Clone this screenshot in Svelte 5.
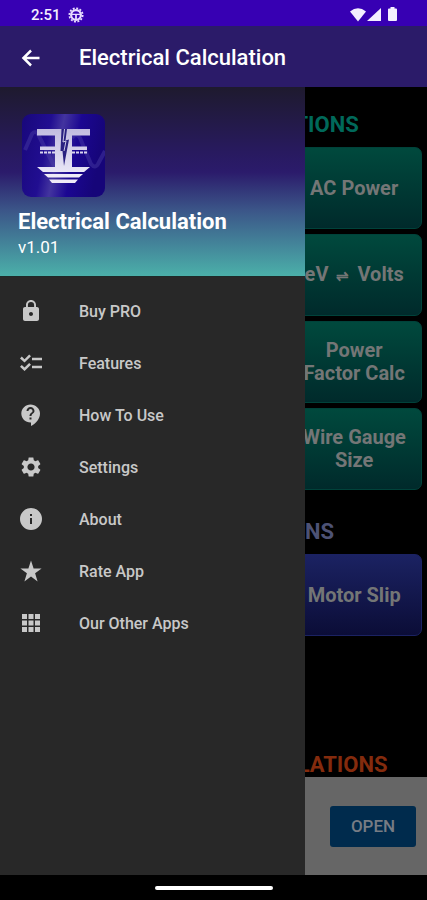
<script>
    const menu = [
        { label: "Buy PRO", path: "M18 8h-1V6c0-2.8-2.2-5-5-5S7 3.200 7 6v2H6c-1.100 0-2 .9-2 2v10c0 1.100.9 2 2 2h12c1.100 0 2-.9 2-2V10c0-1.100-.9-2-2-2zM12 17c-1.100 0-2-.9-2-2s.9-2 2-2 2 .9 2 2-.9 2-2 2zM15.100 8H8.900V6a3.100 3.100 0 0 1 6.200 0z" },
        { label: "Features", path: "M23 6.700h-10v2.500h10V6.700zm0 8h-10v2.500h10v-2.500zM5.540 11.500L1 7.460l1.800-1.900 2.740 2.600 4.640-4.600 1.800 1.800L5.540 11.500zm0 8.500L1 15.860l1.800-1.900 2.740 2.600 4.640-4.600 1.800 1.800L5.540 20z" },
        { label: "How To Use", path: "M11.500 1.500C6.500 1.500 2.300 5.500 2.300 10.500S6.500 19.500 11.500 19.500h.5v3.500c5.200-2.500 9-7.300 9-12.500C21 5.500 16.500 1.500 11.500 1.500zm1 15h-2v-2h2v2zm0-3.500h-2c0-3.250 3-3 3-5 0-1.100-.9-2-2-2s-2 .9-2 2h-2c0-2.210 1.790-4 4-4s4 1.790 4 4c0 2.500-3 2.750-3 5z" },
        { label: "Settings", path: "M19.140 12.940c.04-.3.06-.61.06-.94 0-.32-.02-.64-.07-.94l2.030-1.580c.18-.14.23-.41.12-.61l-1.920-3.320c-.12-.22-.37-.29-.59-.22l-2.390.96c-.5-.38-1.030-.7-1.620-.94l-.36-2.540c-.04-.24-.24-.41-.48-.41h-3.840c-.24 0-.43.17-.47.41l-.36 2.540c-.59.24-1.130.57-1.620.94l-2.390-.96c-.22-.08-.47 0-.59.22L2.740 8.870c-.12.21-.08.47.12.61l2.030 1.580c-.05.3-.09.63-.09.94s.02.64.07.94l-2.030 1.580c-.18.14-.23.41-.12.61l1.920 3.320c.12.22.37.29.59.22l2.390-.96c.5.38 1.030.7 1.620.94l.36 2.540c.05.24.24.41.48.41h3.840c.24 0 .44-.17.47-.41l.36-2.540c.59-.24 1.130-.56 1.620-.94l2.390.96c.22.08.47 0 .59-.22l1.920-3.320c.12-.22.07-.47-.12-.61l-2.010-1.580zM12 15.600c-1.980 0-3.600-1.620-3.600-3.600s1.620-3.600 3.600-3.600 3.600 1.620 3.600 3.600-1.620 3.600-3.600 3.600z" },
        { label: "About", path: "M12 1a11 11 0 1 0 0 22 11 11 0 0 0 0-22zm1 16h-2v-6h2v6zm0-8h-2V7h2v2z" },
        { label: "Rate App", path: "M12 1.500l2.600 8 8 .1-6.500 4.700 2.500 8.200-6.600-5-6.600 5 2.500-8.200L1.400 9.600l8-.1z" },
        { label: "Our Other Apps", path: "M3 3h5v5H3zm6.500 0h5v5h-5zm6.500 0h5v5h-5zM3 9.500h5v5H3zm6.500 0h5v5h-5zm6.500 0h5v5h-5zM3 16h5v5H3zm6.500 0h5v5h-5zm6.500 0h5v5h-5z" }
    ];

    const sections = [
        { title: "ELECTRICAL CALCULATIONS", tone: "teal", rows: 4, items: [["AC Power"], ["eV", "Volts"], ["Power Factor Calc"], ["Wire Gauge Size"]] },
        { title: "MOTOR CALCULATIONS", tone: "blue", rows: 2, items: [["Motor Slip"]] },
        { title: "POWER & ENERGY CALCULATIONS", tone: "orange", rows: 1, items: [] }
    ];
</script>

<div class="app">
    <div class="status_bar">
        <span>2:51</span>
        <svg viewBox="0 0 18 18" width="16" height="16">
            <circle cx="9" cy="9" r="7.500" fill="none" stroke="#e8dcff" stroke-width="2" stroke-dasharray="2.200 1.727" />
            <circle cx="9" cy="9" r="5.500" fill="none" stroke="#e8dcff" stroke-width="2.500" />
            <path d="M4 7.500h10v1.500H4zM8 8h2v6H8z" fill="#e8dcff" />
        </svg>
        <svg class="status_icons" viewBox="0 0 50 16" width="50" height="16">
            <path d="M1 4.500Q9 -2 17 4.500L9 14.500z" />
            <path d="M32 1v13H18z" />
            <path d="M41.500 0h4v1.500h1.500q1 0 1 1v10.500q0 1-1 1h-7q-1 0-1-1V2.500q0-1 1-1h1.500z" />
        </svg>
    </div>

    <header class="app_bar">
        <button class="back" aria-label="Back">
            <svg viewBox="0 0 24 24" width="24" height="24">
                <path d="M20.500 10.700H7.600l5.300-5.300L11.200 3.500 2.700 12l8.500 8.500 1.700-1.900L7.600 13.300H20.500z" />
            </svg>
        </button>
        <h1>Electrical Calculation</h1>
    </header>

    <div class="body">
        <main>
            {#each sections as section}
                <section class={section.tone}>
                    <h2>{section.title}</h2>
                    <div class="cards" style="--rows: {section.rows}">
                        {#each section.items as [from, to]}
                            <button class="card">
                                {from}{#if to}<span class="swap">⇌</span>{to}{/if}
                            </button>
                        {/each}
                    </div>
                </section>
            {/each}
        </main>

        <aside class="ad">
            <button class="open">OPEN</button>
        </aside>

        <nav class="drawer">
            <div class="drawer_header">
                <svg class="logo" viewBox="0 0 83 83" width="83" height="83">
                    <defs>
                        <linearGradient id="tile" x1="0" y1="0" x2="1" y2="0.200">
                            <stop offset="0" stop-color="#18077b" />
                            <stop offset="0.350" stop-color="#210e91" />
                            <stop offset="0.500" stop-color="#43349f" />
                            <stop offset="0.700" stop-color="#1b0792" />
                            <stop offset="1" stop-color="#160579" />
                        </linearGradient>
                        <linearGradient id="metal" x1="0" y1="0" x2="0" y2="1">
                            <stop offset="0" stop-color="#c1bce0" />
                            <stop offset="1" stop-color="#e9e6f6" />
                        </linearGradient>
                    </defs>
                    <rect width="83" height="83" rx="9" fill="url(#tile)" />
                    <path d="M3 36L10 20q3-4 6 0l15 30q3 5 6 0M50 24q4-6 8 0l11 26q4 5 7 0l7-13" fill="none" stroke="#5144aa" stroke-width="4" opacity="0.400" />
                    <!-- mirrored E pair standing on the earth symbol -->
                    <path d="M15 15H68V21.500H50V32.500H65V36H50V53H68L62 58H21L15 53H33V36H18V32.500H33V21.500H15z" fill="url(#metal)" />
                    <path d="M39.500 15H45L43.500 26.500L47 25.500L42 52L40.500 37H38.500z" fill="#292080" />
                    <path d="M42.500 15L41 28L44 27L42 37" fill="none" stroke="#c9c5e4" stroke-width="1" />
                    <path d="M18 38.500h15M50 38.500h15" stroke="#d9d5ee" stroke-width="2" stroke-dasharray="3 1" />
                    <path d="M22 60h39l-4 3.500H26zM27 65.500h29l-3 3.500H30z" fill="#efecf7" />
                </svg>
                <strong>Electrical Calculation</strong>
                <span>v1.01</span>
            </div>
            <ul class="menu">
                {#each menu as entry}
                    <li>
                        <a href="#menu">
                            <svg viewBox="0 0 24 24" width="24" height="24">
                                <path d={entry.path} fill-rule="evenodd" />
                            </svg>
                            {entry.label}
                        </a>
                    </li>
                {/each}
            </ul>
        </nav>
    </div>

    <div class="nav_bar"><div class="pill"></div></div>
</div>

<style>
    :global(body) {
        background: #000;
    }

    .app {
        display: flex;
        flex-direction: column;
        height: 100vh;
        overflow: hidden;
        background: #000;
        color: #fff;
        font-family: Roboto, "Liberation Sans", sans-serif;
    }

    button {
        border: none;
        padding: 0;
        font-family: inherit;
    }

    svg {
        display: block;
        flex: none;
        fill: currentColor;
    }

    .status_bar {
        display: flex;
        flex: none;
        align-items: center;
        gap: 7px;
        height: 26px;
        padding: 3px 28px 0 31px;
        box-sizing: border-box;
        background: #3700b3;
        color: #f4efff;
        font-size: 15px;
        font-weight: 500;
    }

    .status_icons {
        margin-left: auto;
    }

    .app_bar {
        display: flex;
        flex: none;
        align-items: center;
        gap: 36px;
        height: 61px;
        padding: 2px 19px 0;
        box-sizing: border-box;
        background: #2b1b69;
    }

    .back {
        background: none;
        color: #fff;
    }

    h1 {
        margin: 0;
        font-size: 22px;
        font-weight: 500;
        line-height: 26px;
    }

    .body {
        position: relative;
        display: flex;
        flex: 1;
        flex-direction: column;
        min-height: 0;
    }

    main {
        flex: 1;
        min-height: 0;
        overflow: hidden;
        padding: 0 5px;
    }

    h2 {
        margin: 0;
        padding: 29px 0 9px;
        font-size: 22px;
        font-weight: 700;
        line-height: 26px;
        text-align: center;
        white-space: nowrap;
    }

    section:first-child h2 {
        padding-top: 25px;
    }

    .cards {
        display: grid;
        grid-template-columns: repeat(3, 1fr);
        grid-template-rows: repeat(var(--rows), 82px);
        gap: 5px;
    }

    .card {
        grid-column: 3;
        padding: 0 12px;
        border-radius: 7px;
        color: #747676;
        font-size: 20px;
        font-weight: 700;
        line-height: 23px;
    }

    .swap {
        margin: 0 8px;
        font-size: 15px;
    }

    .teal h2 {
        color: #00695a;
    }

    .teal .card {
        border: 1px solid #00423a;
        background: linear-gradient(#00493d, #002a2b);
    }

    .blue h2 {
        color: #4d5275;
    }

    .blue .card {
        border: 1px solid #1b2262;
        background: linear-gradient(#1b2262, #0b0d37);
    }

    .orange h2 {
        color: #842b0d;
    }

    .ad {
        display: flex;
        flex: none;
        align-items: center;
        justify-content: flex-end;
        height: 98px;
        padding-right: 11px;
        background: #666;
    }

    .open {
        width: 86px;
        height: 41px;
        border-radius: 3px;
        background: #002b4d;
        color: #777c84;
        font-size: 17px;
        font-weight: 500;
    }

    .drawer {
        position: absolute;
        top: 0;
        bottom: 0;
        left: 0;
        width: 305px;
        background: #282828;
    }

    .drawer_header {
        display: flex;
        flex-direction: column;
        align-items: flex-start;
        height: 190px;
        padding: 27px 18px 0;
        box-sizing: border-box;
        border-bottom: 1px solid #1d2a29;
        background: linear-gradient(#1e1a2e, #281a60 35%, #2b1b6b 45%, #3b5588 65%, #4bb0a9);
    }

    .logo {
        margin: 0 4px 12px;
    }

    .drawer_header strong {
        font-size: 22px;
        line-height: 26px;
    }

    .drawer_header span {
        font-size: 17px;
        line-height: 24px;
    }

    .menu {
        margin: 0;
        padding: 8px 0;
        list-style: none;
    }

    .menu a {
        display: flex;
        align-items: center;
        gap: 36px;
        height: 52px;
        padding: 0 19px;
        color: #c8c8c8;
        font-size: 16px;
        font-weight: 500;
        text-decoration: none;
    }

    .nav_bar {
        display: flex;
        flex: none;
        align-items: center;
        justify-content: center;
        height: 25px;
        background: #000;
    }

    .pill {
        width: 118px;
        height: 4px;
        border-radius: 2px;
        background: #fff;
    }
</style>
